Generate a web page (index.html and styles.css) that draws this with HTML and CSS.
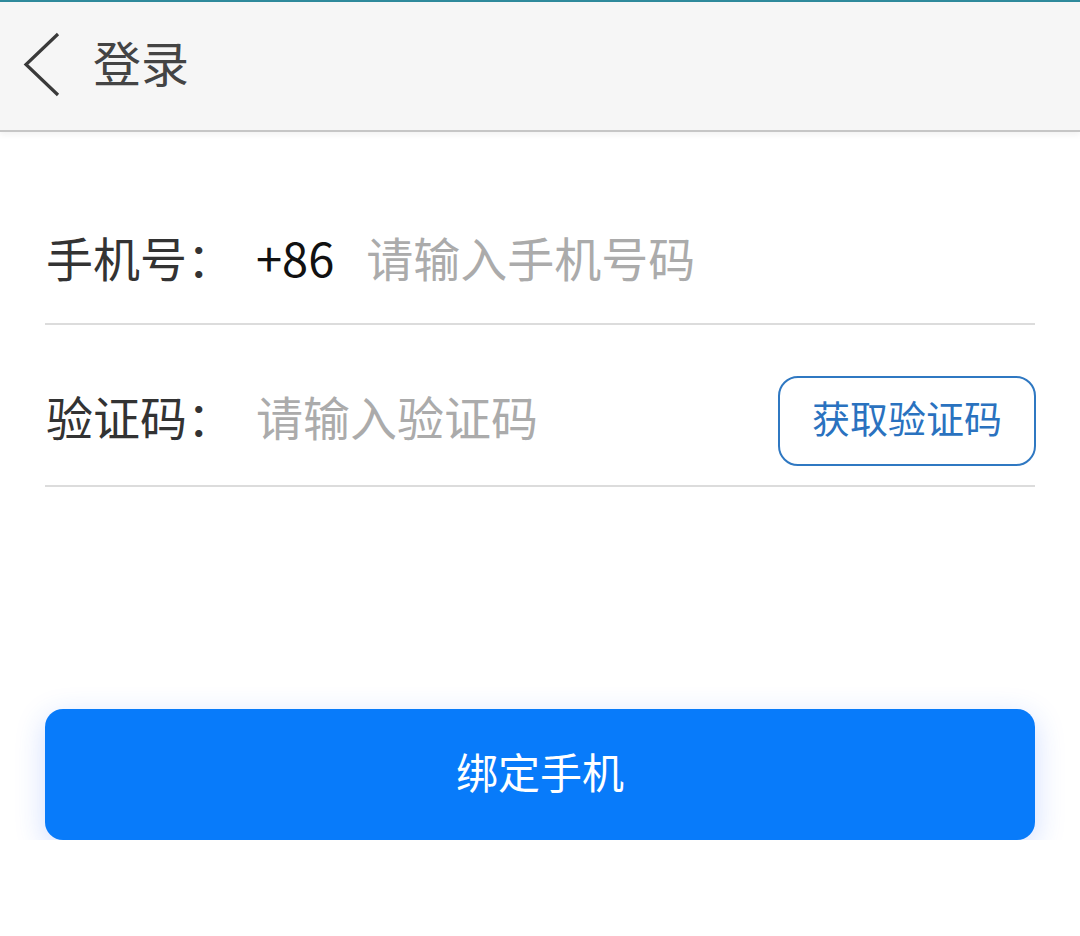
FILE: index.html
```html
<!DOCTYPE html>
<html lang="zh-CN">
<head>
<meta charset="utf-8">
<title>登录</title>
<link rel="stylesheet" href="styles.css">
</head>
<body>
<div class="topline"></div>
<header class="header">
  <svg class="back" width="40" height="70" viewBox="0 0 40 70" aria-hidden="true">
    <path d="M36 4 L4 34.5 L36 65" fill="none" stroke="#3a3a3a" stroke-width="3.2" stroke-linejoin="miter"/>
  </svg>
  <h1 class="title">登录</h1>
</header>
<main class="form">
  <div class="row row-phone">
    <span class="label">手机号：</span>
    <span class="prefix">+86</span>
    <span class="placeholder">请输入手机号码</span>
  </div>
  <div class="row row-code">
    <span class="label">验证码：</span>
    <span class="placeholder grow">请输入验证码</span>
    <button class="code-btn" type="button">获取验证码</button>
  </div>
  <button class="submit" type="button">绑定手机</button>
</main>
</body>
</html>
```
FILE: styles.css
```css
html, body {
  margin: 0;
  padding: 0;
  background: #ffffff;
  font-family: "Noto Sans CJK SC", "Noto Sans", sans-serif;
}

.topline {
  height: 2px;
  background: #2f8a9c;
}

.header {
  height: 128px;
  background: #f6f6f6;
  border-bottom: 2px solid #c6c6c6;
  box-shadow: 0 3px 6px rgba(0, 0, 0, 0.05);
  display: flex;
  align-items: center;
  padding-left: 22px;
  box-sizing: content-box;
}

.back {
  display: block;
  margin-bottom: 3px;
}

.title {
  margin: 0 0 10px 31px;
  font-size: 48px;
  font-weight: 400;
  line-height: 1;
  color: #444444;
}

.form {
  margin: 0 45px;
  width: 990px;
}

.row {
  display: flex;
  align-items: center;
  border-bottom: 2px solid #dcdcdc;
  font-size: 47px;
  line-height: 1;
}

.row-phone {
  margin-top: 68px;
  height: 123px;
}

.row-code {
  height: 128px;
  padding-top: 32px;
}

.label,
.prefix,
.placeholder {
  margin-bottom: 11px;
}

.label {
  width: 210px;
  padding-left: 1px;
  color: #333333;
  white-space: nowrap;
  flex: none;
}

.prefix {
  color: #111111;
  margin-right: 32px;
}

.placeholder {
  color: #ababab;
}

.grow {
  flex: 1;
}

.code-btn {
  width: 258px;
  height: 90px;
  margin-right: -1px;
  border: 2px solid #2f78c2;
  border-radius: 20px;
  background: #ffffff;
  color: #2a72bf;
  font-family: "Noto Sans CJK SC", "Noto Sans", sans-serif;
  font-size: 38px;
  line-height: 1;
  padding: 0 0 8px 0;
  flex: none;
}

.submit {
  display: block;
  margin-top: 222px;
  width: 990px;
  height: 131px;
  border: none;
  border-radius: 18px;
  background: #087bfa;
  color: #ffffff;
  font-family: "Noto Sans CJK SC", "Noto Sans", sans-serif;
  font-size: 42px;
  line-height: 1;
  padding: 0 0 8px 0;
  box-shadow: 0 8px 30px rgba(40, 100, 255, 0.22);
}
```
